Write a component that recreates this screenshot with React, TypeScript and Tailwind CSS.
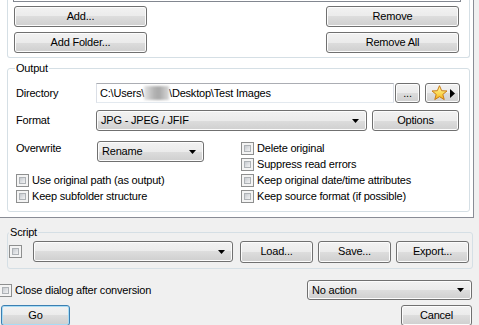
import React from 'react';

const font = { fontFamily: '"Liberation Sans", Arial, sans-serif' };

const btnFace =
  'border border-[#707070] rounded-[3px] bg-[linear-gradient(to_bottom,#f2f2f2_0%,#ebebeb_50%,#dddddd_50%,#cfcfcf_100%)] shadow-[inset_0_0_0_1px_#fcfcfc]';

function Button({ label, className = '' }: { label: string; className?: string }) {
  return (
    <div className={`${btnFace} flex items-center justify-center text-[11px] leading-none text-black ${className}`}>
      {label}
    </div>
  );
}

function Arrow() {
  return (
    <svg width="7" height="4" viewBox="0 0 7 4" className="shrink-0">
      <polygon points="0,0 7,0 3.5,4" fill="#000" />
    </svg>
  );
}

function Combo({ value = '', className = '' }: { value?: string; className?: string }) {
  return (
    <div className={`${btnFace} flex items-center justify-between pl-[4px] pr-[7px] text-[11px] leading-none ${className}`}>
      <span>{value}</span>
      <Arrow />
    </div>
  );
}

function Check() {
  return (
    <div className="w-[13px] h-[13px] shrink-0 border border-[#8e8f8f] bg-[#f4f4f4] p-[2px]">
      <div className="w-full h-full border border-[#aeb2b6] bg-[linear-gradient(135deg,#c6cacf_0%,#dfe1e4_55%,#f2f2f2_100%)]" />
    </div>
  );
}

function CheckRow({ label }: { label: string }) {
  return (
    <div className="h-[16px] flex items-center gap-[3px] text-[11px] leading-none">
      <Check />
      <span>{label}</span>
    </div>
  );
}

function GroupLabel({ text, className = '' }: { text: string; className?: string }) {
  return (
    <span className={`absolute top-[-8px] px-[1px] text-[11px] leading-[14px] ${className}`}>{text}</span>
  );
}

function Star() {
  return (
    <svg width="17" height="16" viewBox="0 0 24 23">
      <defs>
        <linearGradient id="sg" x1="0" y1="0" x2="0" y2="1">
          <stop offset="0" stopColor="#fff7b0" />
          <stop offset="0.6" stopColor="#fbd64a" />
          <stop offset="1" stopColor="#f2a91c" />
        </linearGradient>
      </defs>
      <polygon
        points="12,1 15.1,8.2 22.8,8.6 16.8,13.5 18.8,21 12,16.8 5.2,21 7.2,13.5 1.2,8.6 8.9,8.2"
        fill="url(#sg)"
        stroke="#c77a12"
        strokeWidth="1.4"
        strokeLinejoin="round"
      />
    </svg>
  );
}

export default function App() {
  return (
    <div className="w-[479px] h-[325px] overflow-hidden bg-[#f0f0f0] text-black tracking-[-0.2px]" style={font}>
      {/* tab page */}
      <div className="w-[474px] h-[218px] bg-white border-r border-b border-[#898c95] flex flex-col">
        {/* files group (top cut off) */}
        <div className="ml-[7px] w-[463px] h-[58px] shrink-0 border-x border-b border-[#d5dfe5] rounded-b-[3px] flex flex-col">
          <div className="ml-[5px] w-[448px] h-[2px] border-x border-b border-[#828790]" />
          <div className="mt-[4px] ml-[6px] mr-[10px] flex justify-between">
            <Button label="Add..." className="w-[133px] h-[21px]" />
            <Button label="Remove" className="w-[133px] h-[21px]" />
          </div>
          <div className="mt-[5px] ml-[6px] mr-[10px] flex justify-between">
            <Button label="Add Folder..." className="w-[133px] h-[21px]" />
            <Button label="Remove All" className="w-[133px] h-[21px]" />
          </div>
        </div>

        {/* output group */}
        <div className="relative mt-[10px] ml-[7px] w-[463px] h-[144px] shrink-0 border border-[#d5dfe5] rounded-[3px] pt-[14px] pl-[8px]">
          <GroupLabel text="Output" className="left-[7px] bg-white" />
          <div className="flex items-center h-[20px] text-[11px]">
            <span className="w-[80px]">Directory</span>
            <div className="w-[298px] h-[20px] border border-[#abadb3] border-b-[#e3e9ef] border-x-[#dbdfe6] bg-white flex items-center pl-[3px] leading-none">
              <span>C:\Users\</span>
              <div className="w-[25px] h-[14px] bg-[linear-gradient(to_right,#e6e6e6,#b4b4b4_40%,#a9a9a9_60%,#d8d8d8)] blur-[1px]" />
              <span>\Desktop\Test Images</span>
            </div>
            <Button label="..." className="ml-[1px] w-[25px] h-[20px]" />
            <div className={`${btnFace} ml-[5px] w-[35px] h-[20px] flex items-center justify-center gap-[2px]`}>
              <Star />
              <svg width="5" height="9" viewBox="0 0 5 9">
                <polygon points="0,0 5,4.5 0,9" fill="#000" />
              </svg>
            </div>
          </div>
          <div className="mt-[7px] flex items-center h-[21px] text-[11px]">
            <span className="w-[80px]">Format</span>
            <Combo value="JPG - JPEG / JFIF" className="w-[271px] h-[21px]" />
            <Button label="Options" className="ml-[5px] w-[87px] h-[21px]" />
          </div>
          <div className="mt-[9px] flex">
            <div className="w-[225px] flex flex-col">
              <div className="h-[32px] flex items-start text-[11px]">
                <span className="w-[81px] mt-[3px] leading-none">Overwrite</span>
                <Combo value="Rename" className="w-[107px] h-[21px] mt-[1px]" />
              </div>
              <CheckRow label="Use original path (as output)" />
              <CheckRow label="Keep subfolder structure" />
            </div>
            <div className="flex flex-col">
              <CheckRow label="Delete original" />
              <CheckRow label="Suppress read errors" />
              <CheckRow label="Keep original date/time attributes" />
              <CheckRow label="Keep source format (if possible)" />
            </div>
          </div>
        </div>
      </div>

      {/* script group */}
      <div className="relative mt-[14px] ml-[7px] w-[466px] h-[37px] border border-[#d5dfe5] rounded-[3px] flex items-center pl-[1px] pb-[3px] pt-[5px]">
        <GroupLabel text="Script" className="left-[1px] top-[-7px] bg-[#f0f0f0]" />
        <Check />
        <Combo className="ml-[11px] w-[200px] h-[21px]" />
        <Button label="Load..." className="ml-[7px] w-[73px] h-[22px]" />
        <Button label="Save..." className="ml-[5px] w-[73px] h-[22px]" />
        <Button label="Export..." className="ml-[5px] w-[73px] h-[22px]" />
      </div>

      {/* close dialog row */}
      <div className="mt-[11px] h-[20px] flex items-center justify-between pr-[7px]">
        <div className="flex items-center gap-[3px] -ml-[1px] text-[11px] leading-none">
          <Check />
          <span>Close dialog after conversion</span>
        </div>
        <Combo value="No action" className="w-[165px] h-[20px]" />
      </div>

      {/* go / cancel */}
      <div className="mt-[5px] flex justify-between pl-[1px] pr-[7px]">
        <div className="w-[69px] h-[21px] rounded-[3px] border border-[#3c7fb1] bg-[linear-gradient(to_bottom,#f2f2f2_0%,#ebebeb_50%,#dddddd_50%,#cfcfcf_100%)] shadow-[inset_0_0_0_1px_#a8dcf5] flex items-center justify-center text-[11px] leading-none">
          Go
        </div>
        <Button label="Cancel" className="w-[71px] h-[21px]" />
      </div>
    </div>
  );
}
